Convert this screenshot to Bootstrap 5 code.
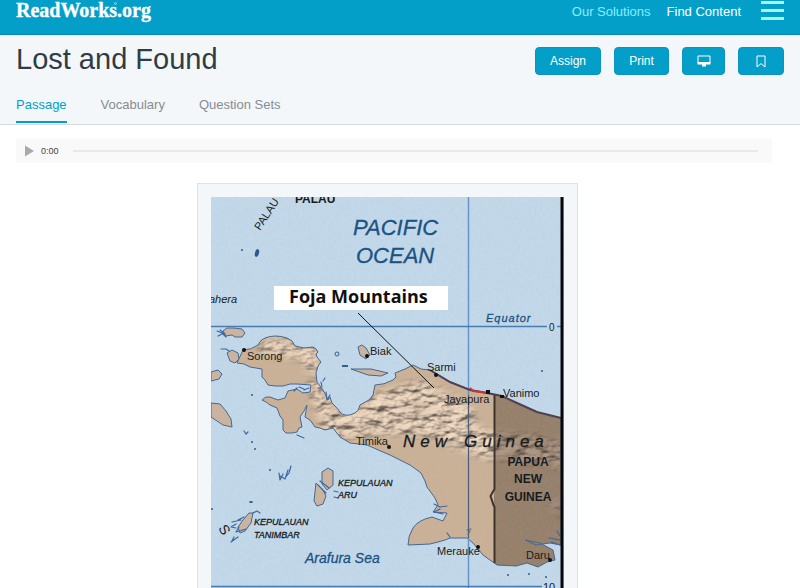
<!DOCTYPE html>
<html lang="en">
<head>
<meta charset="utf-8">
<meta name="viewport" content="width=device-width, initial-scale=1">
<title>Lost and Found - ReadWorks.org</title>
<link href="https://cdn.jsdelivr.net/npm/bootstrap@5.3.0/dist/css/bootstrap.min.css" rel="stylesheet">
<style>
  body { font-family: "Liberation Sans", Arial, sans-serif; color: #303c45; overflow-x: hidden; }
  .topbar { background: #049fc9; height: 35px; border-bottom: 1px solid #0787b2; font-size: 13px; line-height: 24px; }
  .brand { font: bold 20px/20px "Liberation Serif", serif; color: #fff; -webkit-text-stroke: 0.300px #fff; }
  .reg-mark { width: 3px; height: 3px; border: 1px solid #9bdcee; border-radius: 50%; position: absolute; top: 2px; left: 98px; }
  .link-solutions { color: #87effc; margin-right: 16px; }
  .menu-btn { width: 24px; height: 22px; margin-left: 19px; }
  .masthead { background: #f3f7f9; border-bottom: 1px solid #d5dcde; height: 90px; }
  .page-title { font-size: 29px; line-height: 32px; color: #303c45; font-weight: 400; }
  .btn-rw { --bs-btn-bg: #049fc9; --bs-btn-color: #fff; --bs-btn-hover-bg: #0787b2; --bs-btn-hover-color: #fff; height: 28px; font-size: 12px; line-height: 16px; border: 1px solid #0b94be; border-radius: 4px; padding: 0; }
  .w-assign { width: 66px; } .w-print { width: 55px; } .w-screen { width: 43px; } .w-save { width: 46px; }
  .btn-gap { gap: 13px; }
  .tabs { gap: 34px; font-size: 13px; line-height: 20px; }
  .tabs a { color: #858d92; padding-bottom: 6px; border-bottom: 2px solid transparent; margin-bottom: 1px; }
  .tabs a.active { color: #049fc9; border-color: #049fc9; }
  .player { background: #f9f9f9; height: 24px; margin: 14px 28px 0 16px; padding: 0 14px 0 9px; font-size: 9px; line-height: 12px; color: #444; }
  .play-btn { margin-right: 7px; }
  .track { height: 2px; background: #e8e8e8; margin-left: 14px; }
  .frame { background: #f3f7f9; border: 1px solid #dce3e7; border-bottom: 0; width: 381px; max-width: 100%; padding: 13px 13px 0; margin-top: 20px; }
  .stage { padding-right: 26px; }
  .map { font-family: "Liberation Sans", Arial, sans-serif; font-size: 11px; fill: #171b20; }
  .map .sea-name { fill: #1c5283; font-style: italic; stroke: #1c5283; stroke-width: .3px; }
  .map .tracked { letter-spacing: 5px; font-size: 17px; font-style: italic; stroke: #171b20; stroke-width: .3px; }
  .map .tracked-sm { letter-spacing: 1px; }
</style>
<script src="https://cdn.jsdelivr.net/npm/bootstrap@5.3.0/dist/js/bootstrap.bundle.min.js"></script>
</head>
<body>
<header class="topbar d-flex justify-content-between align-items-start px-3">
  <a href="#" class="brand text-decoration-none position-relative">ReadWorks.org<span class="reg-mark"></span></a>
  <nav class="d-flex align-items-start" aria-label="Main">
    <a href="#" class="link-solutions text-decoration-none">Our Solutions</a>
    <a href="#" class="text-white text-decoration-none">Find Content</a>
    <button type="button" class="menu-btn btn p-0 border-0 d-flex" aria-label="Menu">
      <svg width="24" height="22" viewBox="0 0 24 22" fill="#a3f4fb"><path d="M1 1h23v3H1zM1 9h23v3H1zM1 17h23v3H1z"/></svg>
    </button>
  </nav>
</header>

<section class="masthead d-flex flex-column justify-content-between px-3">
  <div class="d-flex justify-content-between align-items-start pt-2">
    <h1 class="page-title mb-0">Lost and Found</h1>
    <div class="d-flex btn-gap pt-1">
      <button type="button" class="btn btn-rw w-assign">Assign</button>
      <button type="button" class="btn btn-rw w-print">Print</button>
      <button type="button" class="btn btn-rw w-screen d-flex justify-content-center align-items-center" aria-label="Present">
        <svg width="14" height="12" viewBox="0 0 14 12"><path d="M1 1h12v7H1z" fill="none" stroke="#fff" stroke-linejoin="round"/><path d="M.5 7h13v2.500H9V11.500H5V9.500H.5z" fill="#fff"/></svg>
      </button>
      <button type="button" class="btn btn-rw w-save d-flex justify-content-center align-items-center" aria-label="Bookmark">
        <svg width="10" height="13" viewBox="0 0 10 13"><path d="M1 1h8v11L5 8.600 1 12z" fill="none" stroke="#fff"/></svg>
      </button>
    </div>
  </div>
  <nav class="tabs d-flex" aria-label="Sections">
    <a href="#" class="active text-decoration-none" aria-current="page">Passage</a>
    <a href="#" class="text-decoration-none">Vocabulary</a>
    <a href="#" class="text-decoration-none">Question Sets</a>
  </nav>
</section>

<main>
  <div class="player d-flex align-items-center">
    <button type="button" class="play-btn btn p-0 border-0 d-flex" aria-label="Play">
      <svg width="9" height="12" viewBox="0 0 9 12"><path d="M0 .500L9 6 0 11.500z" fill="#aaa"/></svg>
    </button>
    <span>0:00</span>
    <div class="track flex-grow-1"></div>
  </div>

  <div class="stage d-flex justify-content-center">
    <figure class="frame mb-0">
      <svg class="map d-block w-100" viewBox="211 197 353 391" role="img" aria-label="Map of New Guinea">
        <defs>
          <filter id="grain" x="0" y="0" width="100%" height="100%">
            <feTurbulence type="fractalNoise" baseFrequency=".35" numOctaves="2" seed="4"/>
            <feColorMatrix values="0 0 0 0 .35  0 0 0 0 .5  0 0 0 0 .65  .7 0 0 0 -.26"/>
          </filter>
          <filter id="relief" x="0" y="0" width="100%" height="100%" color-interpolation-filters="sRGB">
            <feTurbulence type="fractalNoise" baseFrequency=".06 .11" numOctaves="3" seed="8" result="n"/>
            <feColorMatrix in="n" values="0 0 0 0 0 0 0 0 0 0 0 0 0 0 0 1 0 0 0 0"/>
            <feDiffuseLighting surfaceScale="5" lighting-color="#efd8c2" diffuseConstant="1.100"><feDistantLight azimuth="240" elevation="58"/></feDiffuseLighting>
          </filter>
          <filter id="soft"><feGaussianBlur stdDeviation="5"/></filter>
          <path id="mainland" d="M243 350Q251 350 258 345Q260 340 265 338Q275 334 287 338Q293 340 295 346L304 348 313 347 316 349 318 352 316 354 317 357 321 362 318 366 316 373 317 382 323 390 328 400 330 397 332 403 336 407 340 412Q345 418 355 413Q359 411 360 405L369 400 373 395 375 385Q384 385 393 380L396 377 395 373Q406 369 413 365L421 369 430 370Q440 377 450 382L460 386 470 390 487 393 502 396 517 403 537 412 561 418V545L550 543 536 545 525 540 540 543 553 550 555 560 547 562 538 567 527 563 516 566 497 565 483 555 473 543 467 538 450 538 445 540 438 542 430 544 408 545Q408 536 413 528Q418 520 432 517L443 521 447 513 433 512 438 505 435 498 427 487Q425 480 423 477L421 473 417 470 410 465 400 460 390 455 383 452 367 445 350 443 340 437 333 428 325 430 320 428 315 427 310 420 305 417 307 405 304 411 300 417 302 427 299 428 297 432 292 433 286 433 283 430 283 420 280 416 277 408 270 405Q267 402 262 400Q265 396 270 397L278 400 285 398 288 391 297 389 303 393 310 392 311 385 297 384 290 384 283 386 275 386 268 385 265 380 262 377 262 369 250 367 244 364 237 363z"/>
          <clipPath id="land-clip"><use href="#mainland"/></clipPath>
          <mask id="ridge-mask" maskUnits="userSpaceOnUse" x="200" y="190" width="370" height="400">
            <g filter="url(#soft)" fill="none" stroke="#fff" stroke-linecap="round" opacity=".75"><path d="M335 425C375 422 410 414 450 430S480 445 525 448L565 456" stroke-width="26"/><path d="M265 345L310 352 312 365M316 385L325 412" stroke-width="15"/><path d="M375 405L420 392 465 415" stroke-width="20"/><path d="M550 500L565 515" stroke-width="6"/></g>
          </mask>
        </defs>
        <rect x="211" y="197" width="353" height="391" fill="#c3d9ea"/>
        <rect x="211" y="197" width="353" height="391" filter="url(#grain)" opacity=".5"/>

        <!-- main island, mountain relief and the darker eastern half -->
        <use href="#mainland" fill="#cbb196"/>
        <g clip-path="url(#land-clip)">
          <rect x="211" y="330" width="353" height="258" filter="url(#relief)" mask="url(#ridge-mask)"/>
          <path d="M494 380H564V588H494z" fill="#584536" opacity=".45"/>
          <rect x="211" y="330" width="353" height="258" filter="url(#grain)" opacity=".3"/>
        </g>
        <g stroke="#4a668d" stroke-width="1" stroke-linejoin="round">
          <use href="#mainland" fill="none"/>
          <g fill="#c9b4a2">
            <path d="M227 353L232 350 238 353 239 359 235 363 230 361z"/>
            <path d="M223 331l4-3 7 0 8 1 3 4-3 4-7 0-3-2-6 1z"/>
            <path d="M211 372l7-2 4 4-3 5-8 2z"/>
            <path d="M211 403l9 1 6 7 5 8 1 8-9-2-12-8z"/>
            <path d="M358 347l4-2 4 3 4 7-4 4-6-4z"/>
            <path d="M351 369l20 0 17 4-7 3-13-1z"/>
            <path d="M322 472l6-4 5 3 0 14-6 5-5-6z"/>
            <path d="M316 483l7 7 3 6-3 8-6 2-3-5z"/>
            <path d="M243 520l6-7 4 0-2 10-6 8-5 2-2-6z"/>
          </g>
        </g>
        <g fill="none" stroke="#3d67a3" stroke-width="1.200" stroke-linecap="round" stroke-linejoin="round">
          <path d="M217 331l5 2 4 4m-8-1l4-2m-2-4l5 4m-4 15h5l3 2m80 37l-5 2m-5-3l5 2m-10 2l3-3M321 382l1 5m4 5l1 8 3-5M325 378l-2 3M241 520l-9 2m12-5l-6 3m8 9l-10 3 3-5M253 513l4-2 3 2m-24 11l-5 3 5 1M231 542l7-5m-6 4l2-4M279 473l1 7 3-6m-3 2l5 3 3-9m-3 8l4-5 2-7M318 485l8 8m-6-12l9 7M334 491l4 1m-4 5l4 1M434 512l6-3m-6 3l9 2m-9-10l6 3 7-1M447 533l3 4m17-7l4-1m-3 5l2-3M551 542l9 3m-11-7l11 2m-3-9l3 5M244 431l2 3m2-2l-2 2m51 1l7 3"/>
        </g>
        <g fill="#305890">
          <ellipse cx="257" cy="253" rx="2" ry="4" transform="rotate(15 257 253)"/>
          <circle cx="242" cy="250" r="1"/><circle cx="252" cy="395" r="1"/><circle cx="252" cy="442" r="1"/><circle cx="255" cy="449" r="1"/><circle cx="270" cy="470" r="1"/><ellipse cx="251" cy="502" rx="2" ry="1"/><circle cx="212" cy="509" r="1"/><circle cx="542" cy="371" r="1"/><circle cx="508" cy="575" r="1"/><circle cx="529" cy="574" r="1"/><circle cx="546" cy="577" r="1"/>
        </g>
        <circle cx="337" cy="354" r="2" fill="none" stroke="#345c9c"/>
        <path d="M342 366h6" stroke="#345c9c" stroke-width="2"/>

        <!-- graticule and border lines -->
        <path d="M468.500 197V588" stroke="#6a93c8" stroke-width="1.500"/>
        <path d="M468.500 395V538" stroke="#4d5f78" stroke-width="1"/>
        <path d="M211 326.500H547M557 326.500H562M211 586.500H542" stroke="#477cae" stroke-width="1.500" fill="none"/>
        <path d="M430 370L450 382 470 390 487 393 502 396 517 403 537 412 561 418" fill="none" stroke="#514050" stroke-width="2"/>
        <path d="M470 388l3 3 8 1 6 1" fill="none" stroke="#c93336" stroke-width="2"/>
        <path d="M494.500 395V489l-4 7 3 9 1 2V563" fill="none" stroke="#3f332e" stroke-width="2"/>
        <path d="M562 197V588" stroke="#080808" stroke-width="3"/>

        <g fill="#111">
          <circle cx="244" cy="350" r="2"/><circle cx="367" cy="356" r="2"/><circle cx="436" cy="375" r="2"/><path d="M486 390h4v4h-4zM500 395h4v3h-4z"/><circle cx="389" cy="447" r="2"/><circle cx="478" cy="547" r="2"/><circle cx="550" cy="560" r="2"/>
          <path d="M276 197l4-2 1 2z"/>
        </g>

        <text x="295" y="203" font-size="12" font-weight="bold">PALAU</text>
        <text transform="translate(260 231) rotate(-57)" font-size="11">PALAU</text>
        <g class="sea-name">
          <text x="353" y="235" font-size="22">PACIFIC</text>
          <text x="356" y="263" font-size="22">OCEAN</text>
          <text x="486" y="322" class="tracked-sm">Equator</text>
          <text x="305" y="563" font-size="14">Arafura Sea</text>
        </g>
        <text x="549" y="331" font-size="10">0</text>
        <text x="543" y="591" font-size="11">10</text>
        <text x="209" y="303" font-style="italic">ahera</text>
        <path d="M274 286H448V310H274z" fill="#fff"/>
        <path d="M358 313L434 388" stroke="#111"/>
        <text x="289" y="303" font-size="18" font-weight="bold" font-family="Open Sans, sans-serif" fill="#111">Foja Mountains</text>
        <text x="247" y="360">Sorong</text>
        <text x="370" y="355">Biak</text>
        <text x="427" y="371">Sarmi</text>
        <text x="444" y="403">Jayapura</text>
        <text x="503" y="397">Vanimo</text>
        <text x="356" y="445">Timika</text>
        <text x="403" y="447" class="tracked">New</text>
        <text x="464" y="447" class="tracked">Guinea</text>
        <g font-size="12" font-weight="bold" text-anchor="middle"><text x="528" y="466">PAPUA</text><text x="528" y="483">NEW</text><text x="528" y="501">GUINEA</text></g>
        <g font-size="9" font-style="italic" stroke="#171b20" stroke-width=".3"><text x="338" y="486">KEPULAUAN</text><text x="338" y="498">ARU</text><text x="254" y="525">KEPULAUAN</text><text x="254" y="538">TANIMBAR</text></g>
        <text transform="translate(218 528) rotate(60)" font-size="14">S</text>
        <text x="437" y="555">Merauke</text>
        <text x="526" y="559">Daru</text>
      </svg>
    </figure>
  </div>
</main>
</body>
</html>
